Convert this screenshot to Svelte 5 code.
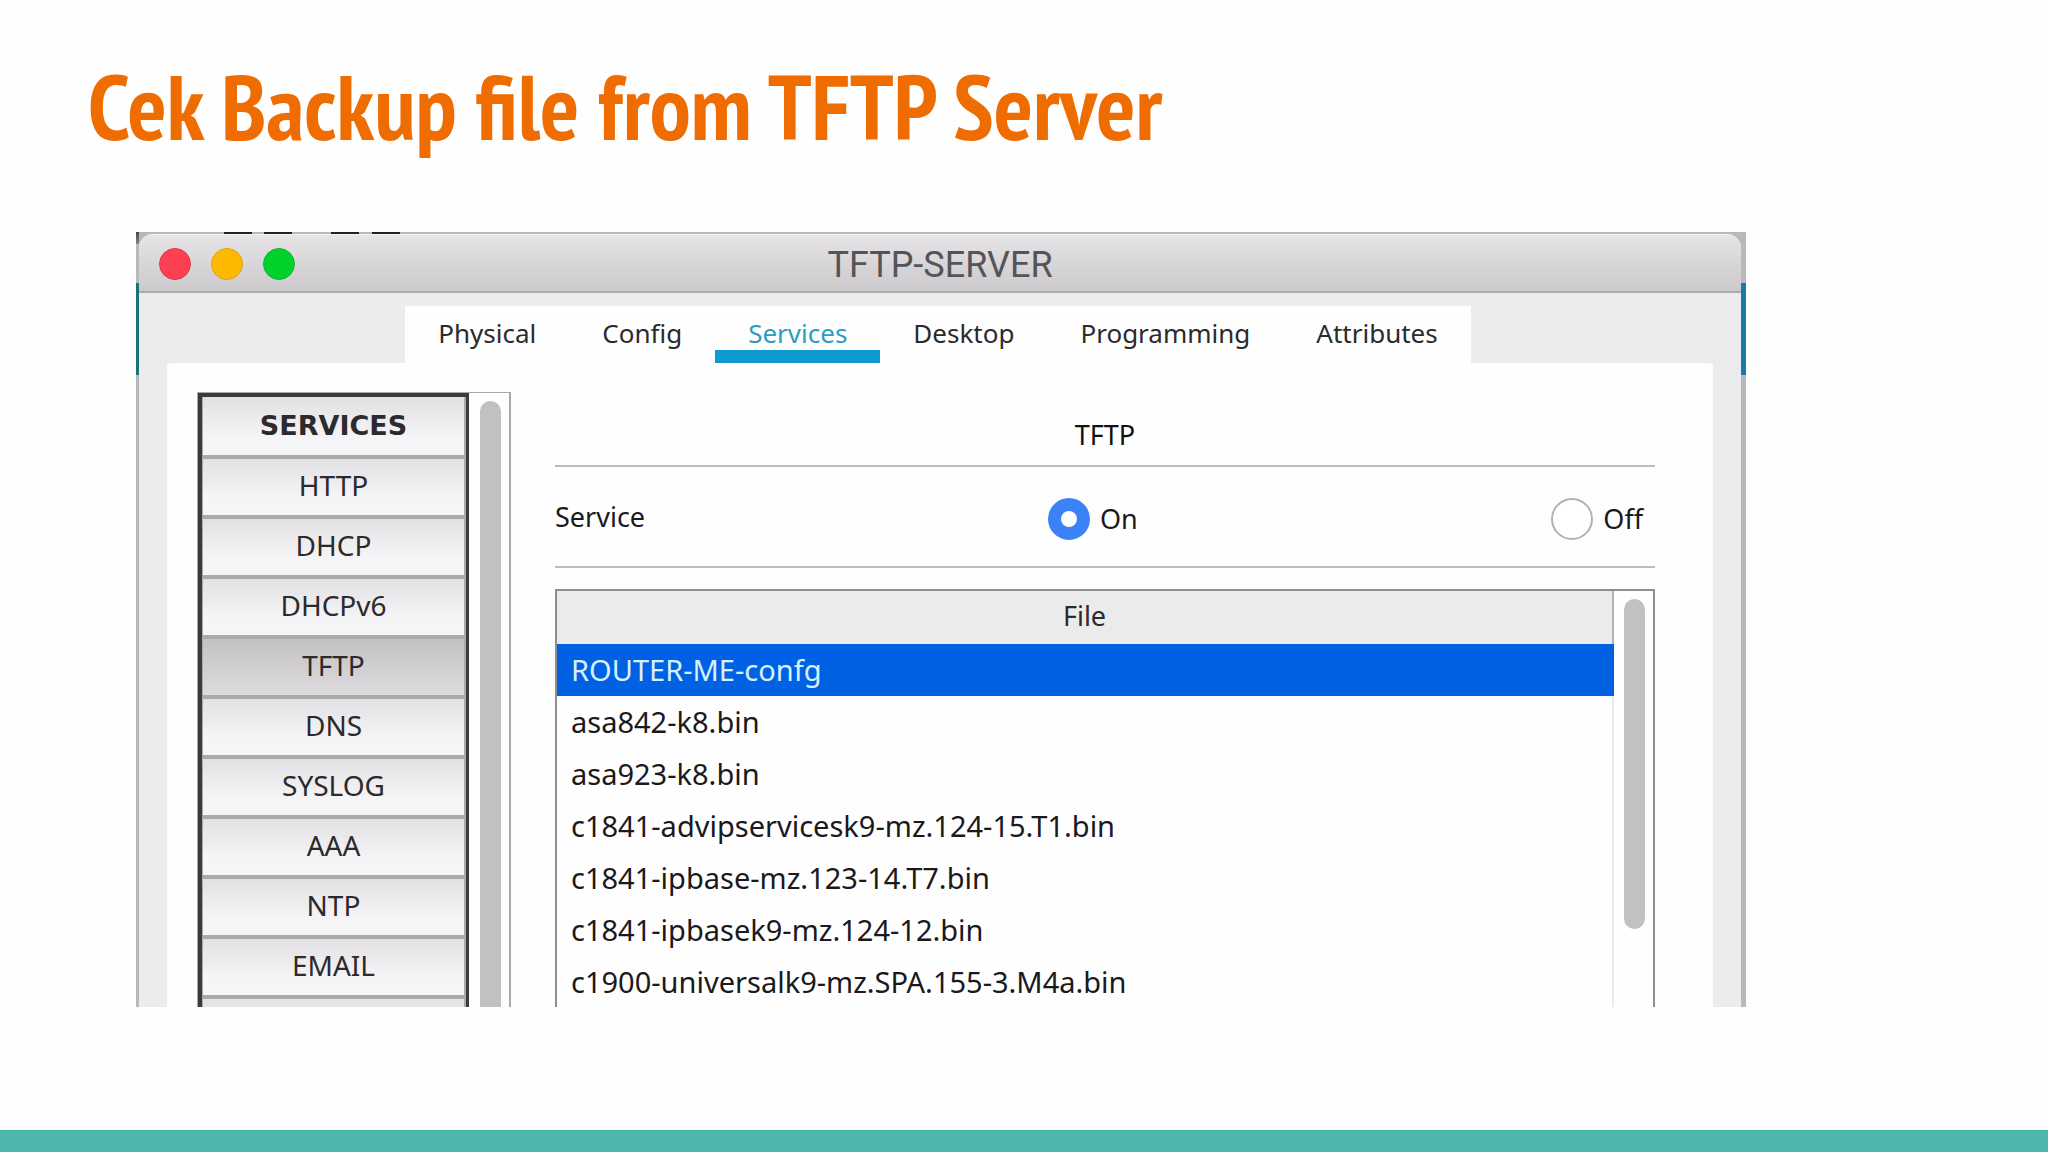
<script lang="ts">
  const TABS = ['Physical', 'Config', 'Services', 'Desktop', 'Programming', 'Attributes'];
  const SERVICES = ['HTTP', 'DHCP', 'DHCPv6', 'TFTP', 'DNS', 'SYSLOG', 'AAA', 'NTP', 'EMAIL'];
  const FILES = [
    'ROUTER-ME-confg',
    'asa842-k8.bin',
    'asa923-k8.bin',
    'c1841-advipservicesk9-mz.124-15.T1.bin',
    'c1841-ipbase-mz.123-14.T7.bin',
    'c1841-ipbasek9-mz.124-12.bin',
    'c1900-universalk9-mz.SPA.155-3.M4a.bin',
  ];

  let tab = $state('Services');
  let service = $state('TFTP');
  let power = $state('on');
  let selected = $state(0);
</script>

<div class="slide">
  <h1>Cek Backup file from TFTP Server</h1>

  <main class="shot">
    <div class="window">
      <header class="titlebar">
        <div class="lights">
          <button class="light red" aria-label="Close"></button>
          <button class="light yellow" aria-label="Minimize"></button>
          <button class="light green" aria-label="Zoom"></button>
        </div>
        <h2>TFTP-SERVER</h2>
      </header>

      <nav class="tabs">
        {#each TABS as t}
          <button class="tab" class:active={tab === t} onclick={() => (tab = t)}>{t}</button>
        {/each}
      </nav>

      <div class="panel">
        <aside class="sidebar">
          <div class="services">
            <h3>SERVICES</h3>
            {#each SERVICES as s}
              <button class="service" class:active={service === s} onclick={() => (service = s)}>{s}</button>
            {/each}
          </div>
          <div class="track"><div class="thumb"></div></div>
        </aside>

        <section class="content">
          <h3 class="heading">TFTP</h3>

          <div class="power">
            <span id="power-label">Service</span>
            <div class="choices" role="radiogroup" aria-labelledby="power-label">
              <label><input type="radio" name="power" value="on" bind:group={power} />On</label>
              <label><input type="radio" name="power" value="off" bind:group={power} />Off</label>
            </div>
          </div>

          <div class="files">
            <table>
              <thead>
                <tr><th>File</th></tr>
              </thead>
              <tbody>
                {#each FILES as file, i}
                  <tr class:selected={selected === i} onclick={() => (selected = i)}>
                    <td>{file}</td>
                  </tr>
                {/each}
              </tbody>
            </table>
            <div class="track"><div class="thumb short"></div></div>
          </div>
        </section>
      </div>
    </div>
  </main>

  <footer></footer>
</div>

<style>
  :global(body) { margin: 0; background: #fefefe; }

  .slide {
    height: 100vh;
    display: flex;
    flex-direction: column;
    overflow: hidden;
    font-family: 'Noto Sans', 'Open Sans', sans-serif;
    font-size: 27px;
    color: #2b2a2c;
  }
  h1, h2, h3 { margin: 0; }
  button {
    font: inherit;
    color: inherit;
    border: 0;
    padding: 0;
    background: none;
    cursor: pointer;
  }

  h1 {
    padding: 50px 88px 70px;
    font-family: 'PT Sans Narrow', 'Open Sans Condensed', 'Noto Sans Condensed', 'Roboto Condensed', 'Noto Sans CJK SC', sans-serif;
    font-size: 92px;
    line-height: 112px;
    font-weight: 700;
    color: #ef6c00;
    white-space: nowrap;
  }

  /* what shows of the desktop behind the window */
  .shot {
    flex: 1;
    min-height: 0;
    display: flex;
    margin: 0 302px 123px 136px;
    padding: 2px 5px 0 3px;
    overflow: hidden;
    background:
      linear-gradient(#222, #222) 88px 0 / 28px 3px no-repeat,
      linear-gradient(#222, #222) 128px 0 / 28px 3px no-repeat,
      linear-gradient(#222, #222) 195px 0 / 28px 3px no-repeat,
      linear-gradient(#222, #222) 236px 0 / 28px 3px no-repeat,
      linear-gradient(#444, #888) 0 0 / 3px 12px no-repeat,
      linear-gradient(#1a7275, #1a7275) 0 51px / 3px 92px no-repeat,
      linear-gradient(#167dab, #167dab) 100% 51px / 5px 92px no-repeat,
      #b9b8ba;
  }
  .window {
    flex: 1;
    min-width: 0;
    display: flex;
    flex-direction: column;
    overflow: hidden;
    border-radius: 14px 14px 0 0;
    background: #ecebed;
  }

  .titlebar {
    flex: none;
    display: grid;
    grid-template-columns: 1fr auto 1fr;
    align-items: center;
    height: 54px;
    padding-top: 2px;
    border-top: 1px solid #f4f3f5;
    border-bottom: 2px solid #adabad;
    background: linear-gradient(#e6e4e7, #cbc9cb);
  }
  .titlebar h2 {
    padding-top: 2px;
    font-family: Roboto, sans-serif;
    font-size: 36px;
    line-height: 40px;
    font-weight: 400;
    color: #555456;
  }
  .lights { display: flex; gap: 20px; padding-left: 20px; }
  .light { width: 32px; height: 32px; border-radius: 50%; }
  .red { background: #fc4052; border: 1px solid #dc3c4c; }
  .yellow { background: #fdb900; border: 1px solid #dca414; }
  .green { background: #00d22a; border: 1px solid #14b632; }

  .tabs {
    flex: none;
    align-self: center;
    display: flex;
    margin: 13px 4px 0 0;
    font-size: 26px;
    background: #fefefe;
  }
  .tab {
    padding: 10px 33px 0;
    line-height: 34px;
    border-bottom: 13px solid transparent;
  }
  .tab.active { color: #2c9cc4; border-color: #0d9bd2; }

  .panel {
    flex: 1;
    min-height: 0;
    display: flex;
    gap: 44px;
    margin: 0 28px;
    padding: 29px 58px 0 30px;
    background: #fefefe;
    border-radius: 4px 4px 0 0;
  }

  .sidebar {
    flex: none;
    display: flex;
    width: 311px;
    border: 1px solid #a9a7aa;
    border-right-width: 2px;
    border-bottom: 0;
  }
  .services {
    flex: 1;
    display: flex;
    flex-direction: column;
    border: 4px solid #3b3a3c;
    border-right-width: 3px;
    border-bottom: 0;
    background: #aaa9ab;
  }
  .services h3,
  .service {
    flex: none;
    height: 56px;
    margin: 0 2px 4px 1px;
    font-size: 28px;
    line-height: 50px;
    padding-bottom: 4px;
    box-sizing: border-box;
    background: linear-gradient(#e2e0e3, #f5f4f6 70%);
  }
  .services h3 {
    height: 58px;
    font-family: 'DejaVu Sans', sans-serif;
    font-size: 27px;
    line-height: 58px;
    font-weight: 700;
    text-align: center;
  }
  .service.active { background: linear-gradient(#c3c1c4, #dddbde); }
  /* blank end of the list */
  .services::after {
    content: '';
    flex: 1;
    margin: 0 2px 0 1px;
    background: #e6e4e7;
  }

  .track { flex: none; width: 21px; padding: 8px 8px 0 11px; }
  .thumb { height: 100%; border-radius: 11px 11px 0 0; background: #c2c0c3; }
  .thumb.short { height: 330px; border-radius: 11px; }

  .content { flex: 1; min-width: 0; display: flex; flex-direction: column; }
  .heading {
    flex: none;
    padding: 22px 0 9px;
    font-size: 27px;
    line-height: 42px;
    font-weight: 400;
    text-align: center;
    color: #111;
  }
  .power {
    flex: none;
    display: grid;
    grid-template-columns: 493fr 607fr;
    align-items: center;
    height: 99px;
    border: 2px solid #bdbbbe;
    border-width: 2px 0;
    color: #1a191b;
  }
  .choices { display: flex; justify-content: space-between; padding: 4px 12px 0 0; }
  label { display: flex; align-items: center; gap: 10px; }
  input[type='radio'] {
    appearance: none;
    width: 42px;
    height: 42px;
    margin: 0;
    border: 2px solid #b3b1b4;
    border-radius: 50%;
    background: #fff;
  }
  input[type='radio']:checked { border: 13px solid #3b82f6; }

  .files {
    flex: 1;
    min-height: 0;
    display: flex;
    margin-top: 21px;
    border: 2px solid #8f8d90;
    border-bottom: 0;
    overflow: hidden;
  }
  .files .track { padding-left: 10px; }
  table { flex: 1; align-self: flex-start; border-collapse: collapse; }
  th {
    height: 49px;
    padding: 0 0 4px;
    line-height: 36px;
    font-weight: 400;
    text-align: center;
    background: #ecebec;
    border-right: 2px solid #b5b3b6;
  }
  td {
    height: 52px;
    padding: 0 14px;
    font-size: 29px;
    line-height: 36px;
    white-space: nowrap;
    color: #1a191b;
    border-right: 2px solid #ebe9ec;
  }
  .selected td { background: #0062e3; color: #d6f0ff; border-color: #0062e3; }

  footer { flex: none; height: 22px; background: #4db6ac; }
</style>
